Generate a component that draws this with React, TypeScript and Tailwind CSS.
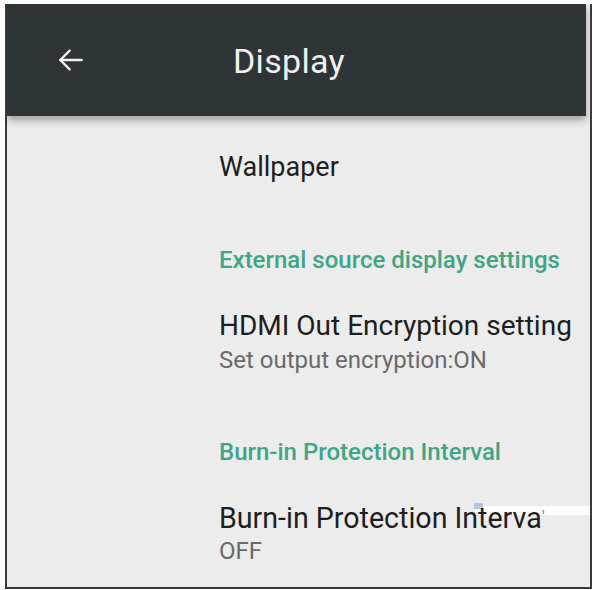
import React from "react";

export default function App() {
  return (
    <div className="w-[595px] h-[590px] bg-white pt-[4px] pl-[5px] pr-[3px] pb-[1px]" style={{ fontFamily: "Roboto, 'Noto Sans', sans-serif" }}>
      <div className="relative h-full border-2 border-t-0 border-[#3a3a3a] bg-[#ececec] flex flex-col overflow-hidden">
        <div className="relative z-10 h-[112px] shrink-0 bg-[#2f3437] flex items-center shadow-[0_4px_8px_rgba(0,0,0,0.35)] mr-[4px]">
          <div className="w-[226px] pl-[48px] flex items-center">
            <svg width="32" height="32" viewBox="0 0 24 24" fill="none" stroke="#f2f2f2" strokeWidth="1.8" strokeLinecap="round" strokeLinejoin="round">
              <path d="M20 12H4" />
              <path d="M11 5l-7 7 7 7" />
            </svg>
          </div>
          <span className="text-[34px] text-[#f0f0f0] tracking-[0.3px] pt-[2px]">Display</span>
        </div>
        <div className="flex flex-col pl-[212px]">
          <div className="h-[100px] flex items-center pt-[2px] text-[27px] text-[#1e1e1e]">Wallpaper</div>
          <div className="h-[88px] flex items-center text-[24px] font-medium text-[#3fa584] whitespace-nowrap">External source display settings</div>
          <div className="pt-[4px] flex flex-col">
            <div className="text-[28px] leading-[36px] text-[#1e1e1e] whitespace-nowrap">HDMI Out Encryption setting</div>
            <div className="text-[24px] leading-[32px] text-[#6a6a6a] whitespace-nowrap">Set output encryption:ON</div>
          </div>
          <div className="pt-[58px] text-[24px] leading-[36px] font-medium text-[#3fa584] whitespace-nowrap">Burn-in Protection Interval</div>
          <div className="pt-[30px] flex flex-col">
            <div className="relative text-[28.6px] leading-[36px] text-[#1e1e1e] whitespace-nowrap">
              <span className="absolute left-[256px] top-[6px] w-[120px] h-[9px] bg-white" />
              <span className="absolute left-[255px] top-[3px] w-[9px] h-[6px] bg-[#9aaee0]/70" />
              <span className="relative">Burn-in Protection Interva<span className="text-[#888] text-[18px] align-top">'</span></span>
            </div>
            <div className="text-[24px] leading-[30px] text-[#6a6a6a]">OFF</div>
          </div>
        </div>
      </div>
    </div>
  );
}
